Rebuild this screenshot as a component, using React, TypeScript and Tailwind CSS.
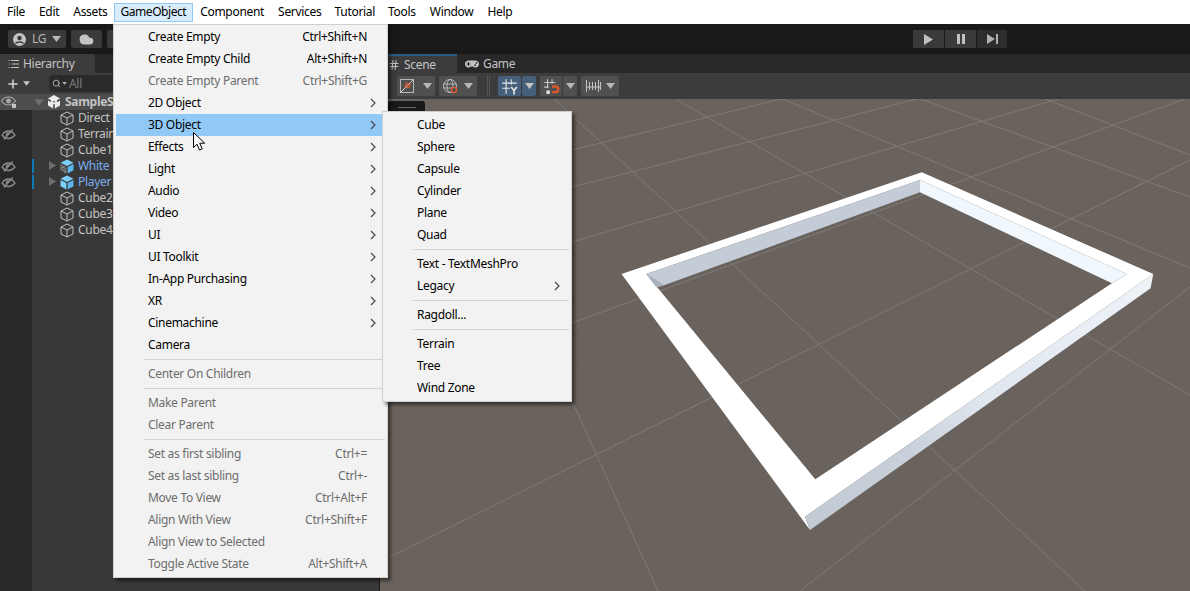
import { Cloud, Hash, Plus, Search } from "lucide-react";
import { FaGamepad } from "react-icons/fa";

type MenuEntry = { label?: string; shortcut?: string; off?: boolean; sub?: boolean; active?: boolean; sep?: boolean };

const topMenus = [
  { label: "File", className: "mx-px" },
  { label: "Edit", className: "mx-px" },
  { label: "Assets", className: "ml-px" },
  { label: "GameObject", className: "border border-[#90c8f6] bg-[#d9ecfc] tracking-[-0.45px]" },
  { label: "Component", className: "mx-px" },
  { label: "Services", className: "ml-px" },
  { label: "Tutorial", className: "ml-px" },
  { label: "Tools", className: "mx-px" },
  { label: "Window", className: "mx-px" },
  { label: "Help", className: "mx-px" },
];

const gameObjectMenu: MenuEntry[] = [
  { label: "Create Empty", shortcut: "Ctrl+Shift+N" },
  { label: "Create Empty Child", shortcut: "Alt+Shift+N" },
  { label: "Create Empty Parent", shortcut: "Ctrl+Shift+G", off: true },
  { label: "2D Object", sub: true },
  { label: "3D Object", sub: true, active: true },
  { label: "Effects", sub: true },
  { label: "Light", sub: true },
  { label: "Audio", sub: true },
  { label: "Video", sub: true },
  { label: "UI", sub: true },
  { label: "UI Toolkit", sub: true },
  { label: "In-App Purchasing", sub: true },
  { label: "XR", sub: true },
  { label: "Cinemachine", sub: true },
  { label: "Camera" },
  { sep: true },
  { label: "Center On Children", off: true },
  { sep: true },
  { label: "Make Parent", off: true },
  { label: "Clear Parent", off: true },
  { sep: true },
  { label: "Set as first sibling", shortcut: "Ctrl+=", off: true },
  { label: "Set as last sibling", shortcut: "Ctrl+-", off: true },
  { label: "Move To View", shortcut: "Ctrl+Alt+F", off: true },
  { label: "Align With View", shortcut: "Ctrl+Shift+F", off: true },
  { label: "Align View to Selected", off: true },
  { label: "Toggle Active State", shortcut: "Alt+Shift+A", off: true },
];

const objectMenu: MenuEntry[] = [
  { label: "Cube" },
  { label: "Sphere" },
  { label: "Capsule" },
  { label: "Cylinder" },
  { label: "Plane" },
  { label: "Quad" },
  { sep: true },
  { label: "Text - TextMeshPro" },
  { label: "Legacy", sub: true },
  { sep: true },
  { label: "Ragdoll..." },
  { sep: true },
  { label: "Terrain" },
  { label: "Tree" },
  { label: "Wind Zone" },
];

const treeRows = [
  { name: "Direct", hidden: false },
  { name: "Terrain", hidden: true },
  { name: "Cube1", hidden: false },
  { name: "White", hidden: true, prefab: true, hatched: true },
  { name: "Player", hidden: true, prefab: true },
  { name: "Cube2", hidden: false },
  { name: "Cube3", hidden: false },
  { name: "Cube4", hidden: false },
];

// major and minor ground lines, in page coordinates
const majorLines = [
  [572, 242, 1065, 97],
  [572, 187, 925, 97],
  [572, 150, 790, 97],
  [572, 323, 1190, 97],
  [390, 557, 1190, 160],
  [800, 591, 1190, 287],
  [552, 97, 1085, 591],
  [672, 97, 1190, 395],
  [778, 97, 1190, 268],
  [915, 97, 1190, 197],
  [1040, 97, 1190, 155],
  [573, 403, 658, 591],
];

function between(a: number[], b: number[], n: number) {
  const out: number[][] = [];
  for (let i = 1; i < n; i++) {
    const t = i / n;
    out.push(a.map((v, k) => v + (b[k] - v) * t));
  }
  return out;
}

const minorLines = [
  ...between([380, 591, 1190, 160], [800, 591, 1190, 287], 10),
  ...between([380, 430, 658, 591], [573, 403, 1085, 591], 10),
  ...between([658, 591, 573, 403], [1085, 591, 552, 97], 10),
];

function Caret({ className = "" }: { className?: string }) {
  return (
    <svg width="9" height="6" viewBox="0 0 9 6" className={className}>
      <polygon points="0,0 9,0 4.5,6" fill="currentColor" />
    </svg>
  );
}

function Chevron() {
  return (
    <svg width="6" height="10" viewBox="0 0 6 10" className="shrink-0">
      <path d="M1 1l4 4-4 4" fill="none" stroke="#4a4a4a" strokeWidth="1.2" />
    </svg>
  );
}

function CubeIcon({ prefab, hatched }: { prefab?: boolean; hatched?: boolean }) {
  if (prefab) {
    return (
      <svg width="14" height="15" viewBox="0 0 14 15" className="shrink-0">
        <polygon points="7,0.5 13.5,3.8 7,7 0.5,3.8" fill="#7cd0f8" />
        <polygon points="7.6,8 13.5,5 13.5,11.2 7.6,14.5" fill="#5cb8ec" />
        <polygon points="6.4,8 0.5,5 0.5,11.2 6.4,14.5" fill={hatched ? "#8a8a8a" : "#7cd0f8"} />
        {hatched && <path d="M1 8l3-2M1 11l5-3M2 13l4-3" stroke="#3c3c3c" strokeWidth="1" />}
      </svg>
    );
  }
  return (
    <svg width="14" height="15" viewBox="0 0 14 15" fill="none" stroke="#c2c2c2" strokeWidth="1" className="shrink-0">
      <path d="M7 1l6 3v7l-6 3-6-3V4zM1 4l6 3 6-3M7 7v7" />
    </svg>
  );
}

function EyeOff() {
  return (
    <svg width="15" height="11" viewBox="0 0 15 11" fill="none" stroke="#8c8c8c" strokeWidth="1.3">
      <path d="M1 6c2-3 4-4 6.500-4s4.500 1 6.500 4c-2 2.500-4 3.500-6.500 3.500S3 8.500 1 6z" />
      <path d="M11.500 .5L3 10.500M7.500 3.500a2.300 2.300 0 0 0-2 3" />
    </svg>
  );
}

function EyeOn() {
  return (
    <svg width="15" height="12" viewBox="0 0 15 12">
      <path d="M0.500 5C2.500 2 4.500 1 7.500 1s5 1 7 4c-2 3-4 4-7 4s-5-1-7-4z" fill="none" stroke="#a8a8a8" strokeWidth="1.2" />
      <circle cx="7.500" cy="5" r="2.400" fill="#a8a8a8" />
      <rect x="11" y="8" width="4" height="4" fill="#c4c4c4" />
    </svg>
  );
}

function UnityLogo() {
  return (
    <svg width="14" height="14" viewBox="0 0 14 14" className="shrink-0">
      <polygon points="7,0 13,3.500 13,10.500 7,14 1,10.500 1,3.500" fill="#ececec" />
      <path d="M7 8V14M7 8L1 4.500M7 8l6-3.500" stroke="#4d4d4d" strokeWidth="1.700" />
      <polygon points="7,3.500 10,5.200 10,7.800 7,9.500 4,7.800 4,5.200" fill="#ececec" />
      <polygon points="7,6 8.500,6.800 7,7.600 5.500,6.800" fill="#4d4d4d" />
    </svg>
  );
}

function ToolBtn({ children, className = "" }: { children: React.ReactNode; className?: string }) {
  return <div className={`flex h-5 items-center justify-center rounded-[2px] ${className}`}>{children}</div>;
}

function MenuList({ items }: { items: MenuEntry[] }) {
  return (
    <>
      {items.map((item, i) =>
        item.sep ? (
          <div key={i} className="ml-[28px] flex h-[7px] items-center">
            <div className="h-px w-full bg-[#d4d4d4]" />
          </div>
        ) : (
          <div
            key={i}
            className={`flex h-[22px] items-center justify-between pl-[32px] ${item.sub ? "pr-[9px]" : "pr-[18px]"} ${
              item.active ? "bg-[#90c8f6]" : ""
            } ${item.off ? "text-[#6d6d6d]" : "text-black"}`}
          >
            <span>{item.label}</span>
            {item.shortcut && <span>{item.shortcut}</span>}
            {item.sub && <Chevron />}
          </div>
        ),
      )}
    </>
  );
}

function SceneCanvas() {
  return (
    <svg viewBox="380 99 810 492" className="block h-full w-full">
      <defs>
        <linearGradient id="sideShade" gradientUnits="userSpaceOnUse" x1="1153" y1="280" x2="805" y2="525">
          <stop offset="0" stopColor="#eef3f8" />
          <stop offset="0.5" stopColor="#dfe6ee" />
          <stop offset="0.7" stopColor="#c8d0da" />
          <stop offset="1" stopColor="#c2cad4" />
        </linearGradient>
      </defs>
      {minorLines.map((l, i) => (
        <line key={i} x1={l[0]} y1={l[1]} x2={l[2]} y2={l[3]} stroke="#6d6660" strokeWidth="1" />
      ))}
      {majorLines.map((l, i) => (
        <line key={i} x1={l[0]} y1={l[1]} x2={l[2]} y2={l[3]} stroke="#7f7b78" strokeWidth="1" />
      ))}
      <path
        fillRule="evenodd"
        fill="#ffffff"
        d="M621.500 274L921.800 172.300L1153.300 274L805 516.700L810 530ZM646.300 274L815.300 479.300L1111.900 283.300L1127 274L920 180Z"
      />
      <polygon points="646.300,274 920,180 920,192.300 664.700,285 656.500,287.300" fill="#c4ccd7" />
      <polygon points="646.300,274 664.700,285 656.500,287.300" fill="#a9b1bd" />
      <polygon points="920,180 1127,274 1111.900,283.300 920,192.300" fill="#f0f7fd" />
      <polygon points="1153.300,274 1150.600,288.300 810,530 805,516.700" fill="url(#sideShade)" />
    </svg>
  );
}

export default function App() {
  return (
    <div className="relative flex h-[591px] w-[1190px] flex-col overflow-hidden bg-[#191919] font-['Noto_Sans',sans-serif] text-[12px] tracking-[-0.3px]">
      {/* main menu bar */}
      <div className="flex h-6 shrink-0 items-center bg-white text-black">
        {topMenus.map((m) => (
          <div key={m.label} className={`flex h-[19px] items-center px-[6px] ${m.className}`}>
            {m.label}
          </div>
        ))}
      </div>

      {/* top toolbar */}
      <div className="flex h-[30px] shrink-0 items-center justify-between pl-2 pr-[183px]">
        <div className="flex items-center gap-[5px]">
          <div className="flex h-[18px] w-[58px] items-center gap-[6px] rounded-[2px] bg-[#3a3a3a] pl-[5px] text-[#b8b8b8]">
            <svg width="13" height="13" viewBox="0 0 13 13">
              <circle cx="6.500" cy="6.500" r="6.500" fill="#c4c4c4" />
              <circle cx="6.500" cy="5" r="2.200" fill="#3a3a3a" />
              <path d="M2.500 10.500c1-2 7-2 8 0" stroke="#3a3a3a" strokeWidth="1.500" fill="none" />
            </svg>
            LG
            <Caret className="text-[#b8b8b8]" />
          </div>
          <div className="flex h-[18px] w-[31px] items-center justify-center rounded-[2px] bg-[#3a3a3a]">
            <Cloud size={15} fill="#c4c4c4" stroke="#c4c4c4" />
          </div>
          <div className="h-[18px] w-[40px] rounded-[2px] bg-[#3a3a3a]" />
        </div>
        <div className="flex gap-px">
          <div className="flex h-[18px] w-[31px] items-center justify-center bg-[#3a3a3a]">
            <svg width="9" height="11" viewBox="0 0 9 11">
              <polygon points="0,0 9,5.500 0,11" fill="#c0c0c0" />
            </svg>
          </div>
          <div className="flex h-[18px] w-[31px] items-center justify-center gap-[2px] bg-[#3a3a3a]">
            <div className="h-[10px] w-[3px] bg-[#c0c0c0]" />
            <div className="h-[10px] w-[3px] bg-[#c0c0c0]" />
          </div>
          <div className="flex h-[18px] w-[30px] items-center justify-center gap-px bg-[#2d2d2d]">
            <svg width="8" height="10" viewBox="0 0 8 10">
              <polygon points="0,0 8,5 0,10" fill="#b0b0b0" />
            </svg>
            <div className="h-[10px] w-[2px] bg-[#b0b0b0]" />
          </div>
        </div>
      </div>

      <div className="flex min-h-0 flex-1">
        {/* hierarchy */}
        <div className="flex w-[380px] shrink-0 flex-col border-r border-[#191919] bg-[#383838] text-[#c4c4c4]">
          <div className="h-[19px] shrink-0 bg-[#282828]">
            <div className="flex h-[19px] w-[95px] items-center gap-[4px] rounded-tr-[3px] bg-[#3c3c3c] pl-2 text-[#c4c4c4]">
              <svg width="11" height="10" viewBox="0 0 11 10" stroke="#c4c4c4" strokeWidth="1">
                <path d="M3 1.500h8M4 5h7M3 8.500h8M.5 1.500h1M1 5h1M.5 8.500h1" />
              </svg>
              Hierarchy
            </div>
          </div>
          <div className="flex h-[21px] shrink-0 items-center bg-[#3c3c3c] pl-[6px]">
            <Plus size={14} strokeWidth={2.6} color="#d4d4d4" />
            <Caret className="ml-[3px] h-[5px] w-[7px] text-[#c4c4c4]" />
            <div className="ml-[19px] flex h-[17px] flex-1 items-center gap-px rounded-[4px] bg-[#2a2a2a] pl-[3px] text-[#7a7a7a]">
              <Search size={9} strokeWidth={2.5} color="#b0b0b0" />
              <Caret className="h-[3px] w-[5px] text-[#b0b0b0]" />
              <span className="ml-px">All</span>
            </div>
          </div>
          <div className="flex min-h-0 flex-1">
            <div className="flex w-8 shrink-0 flex-col bg-[#282828]">
              <div className="flex h-4 items-center bg-[#4d4d4d] pl-[1px]">
                <EyeOn />
              </div>
              {treeRows.map((r) => (
                <div key={r.name} className="flex h-4 items-center pl-px">
                  {r.hidden && <EyeOff />}
                </div>
              ))}
            </div>
            <div className="flex flex-1 flex-col">
              <div className="flex h-4 items-center gap-[3px] bg-[#4d4d4d] pl-[1px] font-bold">
                <Caret className="ml-[1px] h-[7px] w-[10px] text-[#6d6d6d]" />
                <UnityLogo />
                <span className="ml-px">SampleScene</span>
              </div>
              {treeRows.map((r) => (
                <div key={r.name} className="relative flex h-4 items-center pl-[28px]">
                  {r.prefab && (
                    <>
                      <div className="absolute left-0 top-px h-[14px] w-[2px] bg-[#0d7ab8]" />
                      <svg width="7" height="9" viewBox="0 0 7 9" className="absolute left-[17px] top-[3px]">
                        <polygon points="0,0 7,4.500 0,9" fill="#6d6d6d" />
                      </svg>
                    </>
                  )}
                  <CubeIcon prefab={r.prefab} hatched={r.hatched} />
                  <span className={`ml-[4px] ${r.prefab ? "text-[#7cacf0]" : ""}`}>{r.name}</span>
                </div>
              ))}
            </div>
          </div>
        </div>

        {/* scene */}
        <div className="flex min-w-0 flex-1 flex-col">
          <div className="flex h-[19px] shrink-0 bg-[#282828] text-[#c4c4c4]">
            <div className="flex h-full w-[77px] items-center gap-[4px] border-t-2 border-[#2c5d87] bg-[#3c3c3c] pl-2">
              <Hash size={12} />
              Scene
            </div>
            <div className="flex items-center gap-[4px] pl-2">
              <FaGamepad size={14} color="#c4c4c4" />
              Game
            </div>
          </div>
          <div className="flex h-[26px] shrink-0 items-center bg-[#3c3c3c] pl-[17px]">
            <ToolBtn className="w-[38px] gap-[9px] bg-[#505050]">
              <svg width="14" height="14" viewBox="0 0 14 14" fill="none">
                <rect x=".5" y=".5" width="13" height="13" stroke="#b8b8b8" />
                <path d="M1 13L13 1" stroke="#d4d4d4" />
                <circle cx="7.500" cy="6.500" r="2.200" stroke="#e0592a" strokeWidth="1.300" />
              </svg>
              <Caret className="text-[#b8b8b8]" />
            </ToolBtn>
            <ToolBtn className="ml-1 w-[38px] gap-[6px] bg-[#505050]">
              <svg width="15" height="15" viewBox="0 0 15 15" fill="none" stroke="#b8b8b8">
                <circle cx="7" cy="7" r="6.500" />
                <ellipse cx="7" cy="7" rx="3" ry="6.500" />
                <path d="M.5 5h13M.5 9h13" />
                <circle cx="11" cy="11" r="2.600" stroke="#e0592a" strokeWidth="1.300" fill="#505050" />
              </svg>
              <Caret className="text-[#b8b8b8]" />
            </ToolBtn>
            <div className="ml-[10px] h-5 w-[3px] border-x border-[#555]" />
            <ToolBtn className="ml-2 w-[23px] bg-[#46607c]">
              <svg width="17" height="17" viewBox="0 0 15 15" fill="none" stroke="#e6e6e6">
                <path d="M4.500 1v13M9 1v5M1 4.500h13M1 9h7" />
                <path d="M9 8l2.500 3 2.500-3M11.500 11v3.500" strokeWidth="1.500" />
              </svg>
            </ToolBtn>
            <ToolBtn className="ml-px w-[14px] bg-[#46607c]">
              <Caret className="text-[#c4c4c4]" />
            </ToolBtn>
            <ToolBtn className="ml-1 w-[22px] bg-[#505050]">
              <svg width="17" height="17" viewBox="0 0 15 15" fill="none">
                <path d="M4 1v8M8 1v4M1 4h10M1 8h4" stroke="#c4c4c4" />
                <path d="M8 7.500h3a2.500 2.500 0 0 1 0 5H8" stroke="#e0592a" strokeWidth="2" />
                <rect x="3" y="11" width="3" height="3" fill="#e8e8e8" />
              </svg>
            </ToolBtn>
            <ToolBtn className="ml-px w-[14px] bg-[#505050]">
              <Caret className="text-[#b8b8b8]" />
            </ToolBtn>
            <ToolBtn className="ml-1 w-[38px] gap-[5px] bg-[#505050]">
              <svg width="15" height="14" viewBox="0 0 15 14" stroke="#c4c4c4">
                <path d="M.5 1v12M3.500 3v8M6.500 3v8M9.500 3v8M12.500 1v12M14.500 3v8M.5 8h14" />
              </svg>
              <Caret className="text-[#b8b8b8]" />
            </ToolBtn>
          </div>
          <div className="relative min-h-0 flex-1 bg-[#6a625c]">
            <SceneCanvas />
            <div className="absolute left-[8px] top-[2px] flex h-[14px] w-[37px] justify-center rounded-[3px] bg-[#191919] pt-[6px]">
              <div className="h-px w-[18px] bg-[#666]" />
            </div>
          </div>
        </div>
      </div>

      {/* GameObject menu */}
      <div className="absolute left-[113px] top-[24px] h-[554px] w-[275px] border border-[#cfcfcf] bg-[#f2f2f2] px-[2px] pt-px shadow-[3px_3px_3px_rgba(0,0,0,0.45)]">
        <MenuList items={gameObjectMenu} />
      </div>

      {/* 3D Object submenu */}
      <div className="absolute left-[382px] top-[111px] h-[291px] w-[190px] border border-[#cfcfcf] bg-[#f2f2f2] px-[2px] pt-[2px] shadow-[3px_3px_3px_rgba(0,0,0,0.45)]">
        <MenuList items={objectMenu} />
      </div>

      {/* mouse pointer */}
      <svg width="13" height="19" viewBox="0 0 13 19" className="absolute left-[193px] top-[132px]">
        <path d="M.5.500v15l3.500-3.300 2.500 5.800 2.700-1.100-2.500-5.700h5z" fill="#ffffff" stroke="#000000" strokeWidth="1" />
      </svg>
    </div>
  );
}
